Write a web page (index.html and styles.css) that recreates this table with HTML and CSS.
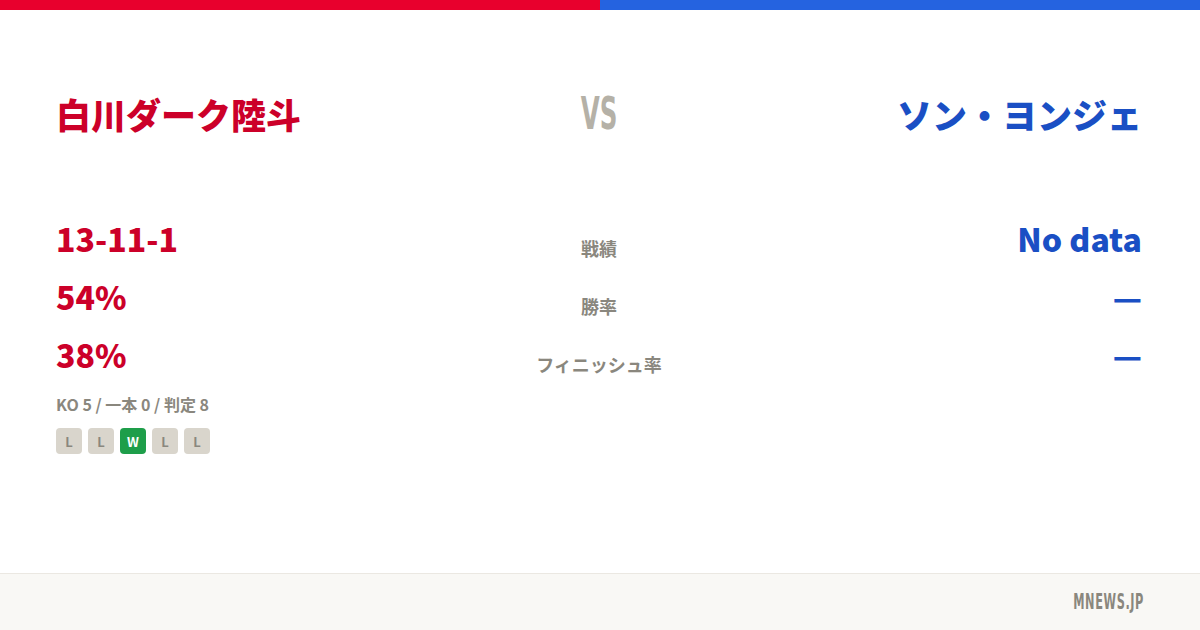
FILE: index.html
```html
<!DOCTYPE html>
<html lang="ja">

<head>
    <meta charset="UTF-8">
    <meta name="viewport" content="width=device-width, initial-scale=1.0">
    <title>白川ダーク陸斗 vs ソン・ヨンジェ</title>
    <link rel="stylesheet" href="styles.css">
</head>

<body>
    <div class="topbar">
        <div class="bar-red"></div>
        <div class="bar-blue"></div>
    </div>

    <div class="main">
        <div class="header">
            <div class="name red">白川ダーク陸斗</div>
            <div class="vs">VS</div>
            <div class="name blue right">ソン・ヨンジェ</div>
        </div>

        <div class="stats">
            <div class="row">
                <div class="value red">13-11-1</div>
                <div class="label">戦績</div>
                <div class="value blue right">No data</div>
            </div>
            <div class="row">
                <div class="value red">54%</div>
                <div class="label">勝率</div>
                <div class="value blue right">—</div>
            </div>
            <div class="row">
                <div class="value red">38%</div>
                <div class="label">フィニッシュ率</div>
                <div class="value blue right">—</div>
            </div>
        </div>

        <div class="detail">KO 5 / 一本 0 / 判定 8</div>
        <div class="results">
            <span class="badge">L</span>
            <span class="badge">L</span>
            <span class="badge win">W</span>
            <span class="badge">L</span>
            <span class="badge">L</span>
        </div>
    </div>

    <div class="footer">
        <span class="brand">MNEWS.JP</span>
    </div>
</body>

</html>
```

FILE: styles.css
```css
body {
    margin: 0;
    width: 1200px;
    height: 630px;
    display: flex;
    flex-direction: column;
    background: #ffffff;
    font-family: "Noto Sans CJK JP", "Noto Sans", sans-serif;
    overflow: hidden;
}

.topbar {
    display: flex;
    height: 10px;
}

.bar-red {
    flex: 1;
    background: #e8002d;
}

.bar-blue {
    flex: 1;
    background: #2563e0;
}

.main {
    flex: 1;
    padding: 0 58px 0 56px;
}

.red {
    color: #cc0029;
}

.blue {
    color: #1a4fc4;
}

.right {
    text-align: right;
}

.header {
    display: grid;
    grid-template-columns: 1fr 1fr 1fr;
    align-items: center;
    height: 56px;
    margin-top: 75px;
}

.name {
    font-size: 35px;
    font-weight: 900;
    line-height: 1;
    white-space: nowrap;
}

.vs {
    text-align: center;
    font-family: "Liberation Sans Narrow", "DejaVu Sans Condensed", sans-serif;
    font-size: 44px;
    font-weight: 700;
    color: #b5b1a7;
    line-height: 1;
    transform: scaleX(0.62);
    margin-top: 2px;
}

.stats {
    margin-top: 68px;
}

.row {
    display: grid;
    grid-template-columns: 1fr 1fr 1fr;
    align-items: center;
    height: 58px;
}

.value {
    font-size: 32px;
    font-weight: 900;
    line-height: 58px;
}

.label {
    text-align: center;
    font-size: 18px;
    font-weight: 700;
    color: #8a877e;
    padding-top: 20px;
}

.detail {
    margin-top: 9px;
    font-size: 16px;
    font-weight: 700;
    color: #8a877e;
}

.results {
    display: flex;
    gap: 6px;
    margin-top: 12px;
}

.badge {
    width: 26px;
    height: 26px;
    border-radius: 4px;
    background: #d9d5cc;
    color: #8a877e;
    font-size: 13px;
    font-weight: 700;
    display: flex;
    align-items: center;
    justify-content: center;
}

.badge.win {
    background: #1e9e4a;
    color: #ffffff;
}

.footer {
    height: 56px;
    border-top: 1px solid #ebe8e2;
    background: #f9f8f5;
    display: flex;
    align-items: center;
    justify-content: flex-end;
    padding: 0 56px;
}

.brand {
    font-family: "Liberation Sans Narrow", "DejaVu Sans Condensed", sans-serif;
    font-size: 21px;
    font-weight: 700;
    letter-spacing: 1px;
    color: #8a877e;
    transform: scaleX(0.6);
    transform-origin: right center;
}
```
